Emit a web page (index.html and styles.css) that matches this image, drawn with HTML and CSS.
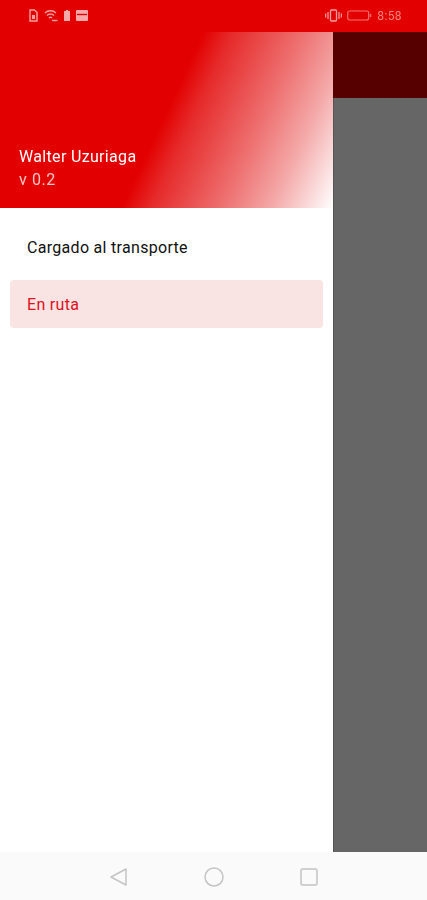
FILE: index.html
```html
<!DOCTYPE html>
<html lang="es">
<head>
<meta charset="utf-8">
<title>En ruta</title>
<link rel="stylesheet" href="styles.css">
</head>
<body>
<div class="status">
  <div class="status-group status-left">
    <svg width="9" height="13" viewBox="0 0 9 13"><path d="M1 1h4.500L8 3.500V12H1z" fill="none" stroke="#f8a0a0" stroke-width="1.400"/><path d="M3 6h3v4H3z" fill="#f8a0a0"/></svg>
    <svg width="14" height="13" viewBox="0 0 14 13"><path d="M1 4c3-3 8-3 11 0M3 6.500c2-2 5-2 7 0M5 9c1-1 2-1 3 0" fill="none" stroke="#f8a0a0" stroke-width="1.300"/><path d="M8 11.500h5.500" stroke="#f8a0a0" stroke-width="1.500"/></svg>
    <svg class="icon-batt" width="6" height="11" viewBox="0 0 6 11"><path d="M2 0h2v1h2v10H0V1h2z" fill="#f8a8a8"/></svg>
    <svg width="12" height="11" viewBox="0 0 12 11"><rect width="12" height="11" rx="1" fill="#f8a8a8"/><path d="M1 4.500h10" stroke="#e30000" stroke-width="1.400"/></svg>
  </div>
  <div class="status-group status-right">
    <svg width="17" height="13" viewBox="0 0 17 13"><rect x="5.500" y="1" width="6" height="11" rx="1" fill="none" stroke="#f8a0a0" stroke-width="1.300"/><path d="M3 3v7M14 3v7M.7 4.500v4M16.300 4.500v4" stroke="#f8a0a0" stroke-width="1.200"/></svg>
    <svg width="25" height="11" viewBox="0 0 25 11"><rect x=".7" y="1" width="21" height="9" rx="2" fill="none" stroke="#f47070" stroke-width="1.200"/><path d="M23.500 4v3" stroke="#f47070" stroke-width="1.500"/></svg>
    <span class="time">8:58</span>
  </div>
</div>
<main class="content">
  <nav class="drawer">
    <header class="drawer-head">
      <div class="user">Walter Uzuriaga</div>
      <div class="version">v 0.2</div>
    </header>
    <ul class="menu">
      <li class="item">Cargado al transporte</li>
      <li class="item item-active">En ruta</li>
    </ul>
  </nav>
  <div class="scrim">
    <div class="scrim-bar"></div>
    <div class="scrim-body"></div>
  </div>
</main>
<footer class="navbar">
  <svg width="20" height="20" viewBox="0 0 20 20"><path d="M17 2v16L2 10z" fill="none" stroke="#c4c4c4" stroke-width="1.500" stroke-linejoin="round"/></svg>
  <svg width="20" height="20" viewBox="0 0 20 20"><circle cx="10" cy="10" r="9" fill="none" stroke="#c4c4c4" stroke-width="1.500"/></svg>
  <svg width="20" height="20" viewBox="0 0 20 20"><rect x="2" y="2" width="16" height="16" rx="2" fill="none" stroke="#d0d0d0" stroke-width="2"/></svg>
</footer>
</body>
</html>
```
FILE: styles.css
```css
* { box-sizing: border-box; }
html, body { margin: 0; padding: 0; }
body {
  width: 427px;
  height: 900px;
  display: flex;
  flex-direction: column;
  overflow: hidden;
  font-family: Roboto, "Liberation Sans", sans-serif;
  background: #fff;
}
.status {
  height: 32px;
  background: #e30000;
  display: flex;
  justify-content: space-between;
  align-items: center;
  padding: 0 25px 1px 29px;
  flex: none;
}
.status-group { display: flex; align-items: center; filter: blur(.4px); }
.status-left { gap: 6px; }
.status-right { gap: 5px; }
.time { font-size: 12px; letter-spacing: .4px; color: #f88080; }
.content { flex: 1; display: flex; min-height: 0; }
.drawer {
  width: 333px;
  background: #fff;
  display: flex;
  flex-direction: column;
  flex: none;
}
.drawer-head {
  height: 176px;
  padding: 115px 19px 0;
  background: linear-gradient(115deg, #e30000 49%, #e62a2a 56%, #ee7070 73%, #f4a8a8 85%, #fff 100%);
  color: #fff;
  flex: none;
}
.user { font-size: 16px; font-weight: 450; line-height: 20px; letter-spacing: .33px; filter: blur(.3px); }
.version { font-size: 16px; line-height: 20px; margin-top: 3px; letter-spacing: .6px; color: #f8c4c4; filter: blur(.3px); }
.menu {
  list-style: none;
  margin: 0;
  padding: 16px 10px;
  display: flex;
  flex-direction: column;
  gap: 8px;
}
.item {
  height: 48px;
  padding: 0 17px 1px;
  display: flex;
  align-items: center;
  border-radius: 4px;
  font-size: 16px;
  font-weight: 450;
  letter-spacing: .3px;
  color: #111;
}
.item-active { padding-bottom: 0; background: #f9e3e3; color: #e0101c; }
.scrim { flex: 1; display: flex; flex-direction: column; }
.scrim-bar { height: 66px; background: #560000; flex: none; }
.scrim-body { flex: 1; background: #666; border-left: 1px solid #555; }
.navbar {
  height: 48px;
  flex: none;
  background: #fafafa;
  display: flex;
  align-items: center;
  gap: 75px;
  padding: 1px 0 0 109px;
}
```
